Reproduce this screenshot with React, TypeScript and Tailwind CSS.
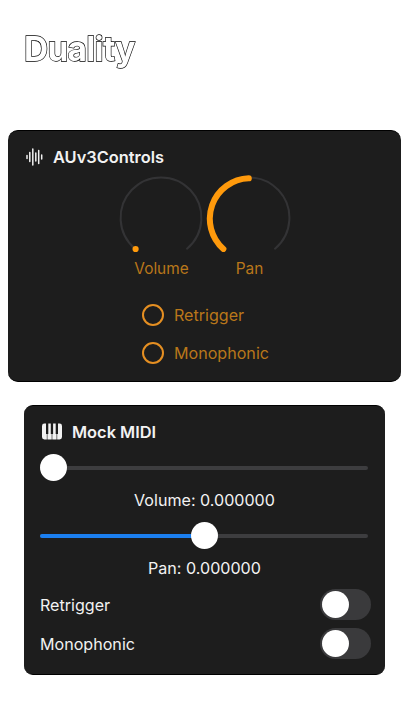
import React from "react";

function Knob({ label, value }: { label: string; value: "min" | "mid" }) {
  return (
    <div className="flex w-[88px] flex-col items-center">
      <svg width="88" height="84" viewBox="0 0 88 84" fill="none" strokeLinecap="round">
        <path d="M18 73.7 A40.4 40.4 0 1 1 70 73.7" stroke="#333335" strokeWidth="2" />
        {value === "min" ? (
          <circle cx="18.6" cy="74" r="3.1" fill="#ff9a0c" />
        ) : (
          <path d="M18.4 73.9 A40.4 40.4 0 0 1 43.8 3.3" stroke="#ff9a0c" strokeWidth="6" />
        )}
      </svg>
      <span className="pl-px text-[15.4px] leading-[20px] text-[#b9771a]">{label}</span>
    </div>
  );
}

function Radio({ label }: { label: string }) {
  return (
    <div className="flex h-[38px] items-center gap-[10px]">
      <span className="size-[22px] rounded-full border-2 border-[#e58f22]" />
      <span className="text-[16.1px] leading-[20px] text-[#b9771a]">{label}</span>
    </div>
  );
}

function Slider({ half }: { half?: boolean }) {
  return (
    <div className="relative flex h-[28px] items-center">
      <div className="h-1 w-[328px] overflow-hidden rounded-full bg-[#3d3d3f]">
        {half && <div className="h-full w-1/2 bg-[#1b7ff0]" />}
      </div>
      <span className={`absolute size-[27px] rounded-full bg-white ${half ? "top-0 left-[151px]" : "-top-[0.5px] left-0"}`} />
    </div>
  );
}

function Toggle({ label }: { label: string }) {
  return (
    <div className="flex h-[39px] items-center justify-between">
      <span className="text-[16.1px] leading-[20px]">{label}</span>
      <span className="flex h-[31px] w-[51px] items-center rounded-full bg-[#3a3a3c] pl-[2px]">
        <span className="size-[27px] rounded-full bg-white" />
      </span>
    </div>
  );
}

export default function App() {
  return (
    <main className="flex h-[726px] w-[408px] flex-col overflow-hidden bg-white font-['Inter','Liberation_Sans',sans-serif] text-[#f2f2f2]">
      <h1 className="ml-6 mt-7 h-[102px] text-[33.5px] font-bold leading-[42px] tracking-[-0.75px] text-white will-change-transform [-webkit-text-stroke:1.3px_#000] [paint-order:stroke_fill]">
        Duality
      </h1>
      <section className="ml-2 h-[252px] w-[393px] rounded-[10px] border-y border-black bg-[#1d1d1d]">
        <div className="flex h-[52px] items-center pl-[18px]">
          <svg width="17" height="20" viewBox="0 0 17 20" stroke="#f0f0f0" strokeWidth="1.5" strokeLinecap="round">
            <path d="M1 8.5V11.5M3.8 5.5V14.5M6.8 2V18M9.8 6V14M12.7 3.5V16.5M15.7 8V12" />
          </svg>
          <h2 className="ml-[10px] text-[16.4px] font-semibold leading-5">AUv3Controls</h2>
        </div>
        <div className="-mt-[8px] flex pl-[109px]">
          <Knob label="Volume" value="min" />
          <Knob label="Pan" value="mid" />
        </div>
        <div className="ml-[134px] mt-[17px]">
          <Radio label="Retrigger" />
          <Radio label="Monophonic" />
        </div>
      </section>
      <section className="ml-6 mt-[23px] h-[270px] w-[361px] rounded-[9px] border-y border-black bg-[#1d1d1d] pl-4 pr-[14px]">
        <div className="flex h-[48px] items-center pt-[3px]">
          <svg className="ml-[2px]" width="20" height="17" viewBox="0 0 20 17">
            <rect y="0.5" width="20" height="16" rx="2.4" fill="#f2f2f2" />
            <path d="M4 0h2.3v11H4zM8.8 0h2.3v11H8.8zM13.7 0H16v11h-2.3z" fill="#1d1d1d" />
            <path d="M5.2 11v6M10 11v6M14.8 11v6" stroke="#1d1d1d" strokeWidth=".6" />
          </svg>
          <h2 className="ml-[10px] text-[16.4px] font-semibold leading-5">Mock MIDI</h2>
        </div>
        <div className="w-[329px]">
          <Slider />
          <p className="mt-[7px] text-center text-[16.1px] leading-[22px]">Volume: 0.000000</p>
          <div className="mt-[11px]"><Slider half /></div>
          <p className="mt-[7px] text-center text-[16.1px] leading-[22px]">Pan: 0.000000</p>
        </div>
        <div className="mt-[6px]">
          <Toggle label="Retrigger" />
          <Toggle label="Monophonic" />
        </div>
      </section>
    </main>
  );
}
